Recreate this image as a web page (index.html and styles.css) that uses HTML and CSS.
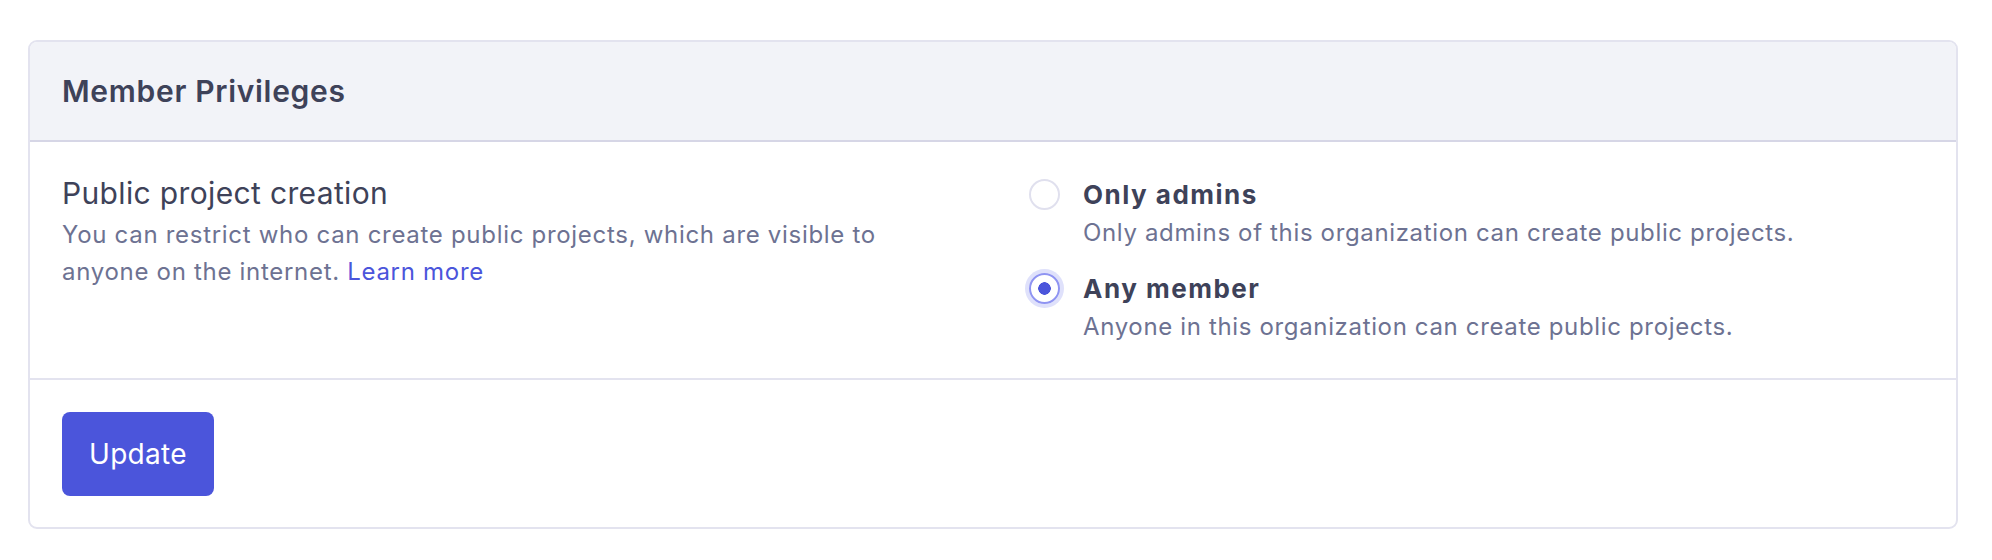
FILE: index.html
```html
<!DOCTYPE html>
<html lang="en">
  <head>
    <meta charset="UTF-8" />
    <meta name="viewport" content="width=device-width, initial-scale=1.0" />
    <title>Member Privileges</title>
    <link rel="stylesheet" href="styles.css">
  </head>
  <body>
    <div class="page">
      <section class="card">
        <header class="card-header">
          <h2>Member Privileges</h2>
        </header>

        <div class="card-body">
          <div class="setting-info">
            <h3>Public project creation</h3>
            <p>
              You can restrict who can create public projects, which are visible to
              anyone on the internet. <a href="#">Learn more</a>
            </p>
          </div>

          <div class="options">
            <label class="option">
              <input type="radio" name="public-projects" value="admins" />
              <span class="option-text">
                <span class="option-title">Only admins</span>
                <span class="option-desc">Only admins of this organization can create public projects.</span>
              </span>
            </label>

            <label class="option">
              <input type="radio" name="public-projects" value="members" checked />
              <span class="option-text">
                <span class="option-title">Any member</span>
                <span class="option-desc">Anyone in this organization can create public projects.</span>
              </span>
            </label>
          </div>
        </div>

        <footer class="card-footer">
          <button class="btn-primary">Update</button>
        </footer>
      </section>
    </div>
  </body>
</html>
```

FILE: styles.css
```css
:root {
  --heading-color: #3e4259;
  --muted-color: #6d7292;
  --accent-color: #4b55db;
  --border-color: #e3e3ef;
  --header-bg: #f2f3f8;
}

* {
  box-sizing: border-box;
}

body {
  margin: 0;
  font-family: Inter, "Noto Sans", sans-serif;
  background: #fff;
  color: var(--heading-color);
}

.page {
  padding: 40px 34px 0 28px;
}

.card {
  border: 2px solid var(--border-color);
  border-radius: 9px;
  overflow: hidden;
}

.card-header {
  background: var(--header-bg);
  border-bottom: 2px solid #d6d6e6;
  padding: 27px 32px 26px;
}

.card-header h2 {
  margin: 0;
  font-size: 30px;
  line-height: 45px;
  font-weight: 600;
  letter-spacing: 0.7px;
}

.card-body {
  display: grid;
  grid-template-columns: 1fr 1fr;
  column-gap: 72px;
  padding: 29px 32px 33px;
  border-bottom: 2px solid var(--border-color);
}

.setting-info h3 {
  margin: 0;
  font-size: 30px;
  line-height: 45px;
  font-weight: 400;
  letter-spacing: 0.35px;
}

.setting-info p {
  margin: 0;
  max-width: 840px;
  font-size: 24px;
  line-height: 37px;
  letter-spacing: 0.7px;
  color: var(--muted-color);
}

.setting-info a {
  color: var(--accent-color);
  text-decoration: none;
}

.options {
  display: flex;
  flex-direction: column;
  gap: 18px;
  padding-top: 4px;
}

.option {
  display: flex;
  align-items: flex-start;
  gap: 23px;
  cursor: pointer;
}

.option input {
  appearance: none;
  margin: 4px 0 0;
  width: 31px;
  height: 31px;
  flex: none;
  border: 2px solid #e0e0ee;
  border-radius: 50%;
  background: #fff;
}

.option input:checked {
  border-color: #8f94f2;
  box-shadow: 0 0 0 4px #dfe1fb;
  background: radial-gradient(circle, var(--accent-color) 6px, #fff 6.5px);
}

.option-text {
  display: flex;
  flex-direction: column;
}

.option-title {
  font-size: 26px;
  line-height: 40px;
  font-weight: 700;
  letter-spacing: 1.5px;
}

.option-desc {
  font-size: 24px;
  line-height: 36px;
  letter-spacing: 0.65px;
  color: var(--muted-color);
}

.card-footer {
  padding: 32px 32px 31px;
}

.btn-primary {
  font-family: inherit;
  font-size: 28px;
  line-height: 42px;
  letter-spacing: 0.3px;
  padding: 21px 27px;
  border: none;
  border-radius: 8px;
  background: var(--accent-color);
  color: #fff;
  cursor: pointer;
}

.btn-primary:hover {
  background: #3f48c9;
}
```
